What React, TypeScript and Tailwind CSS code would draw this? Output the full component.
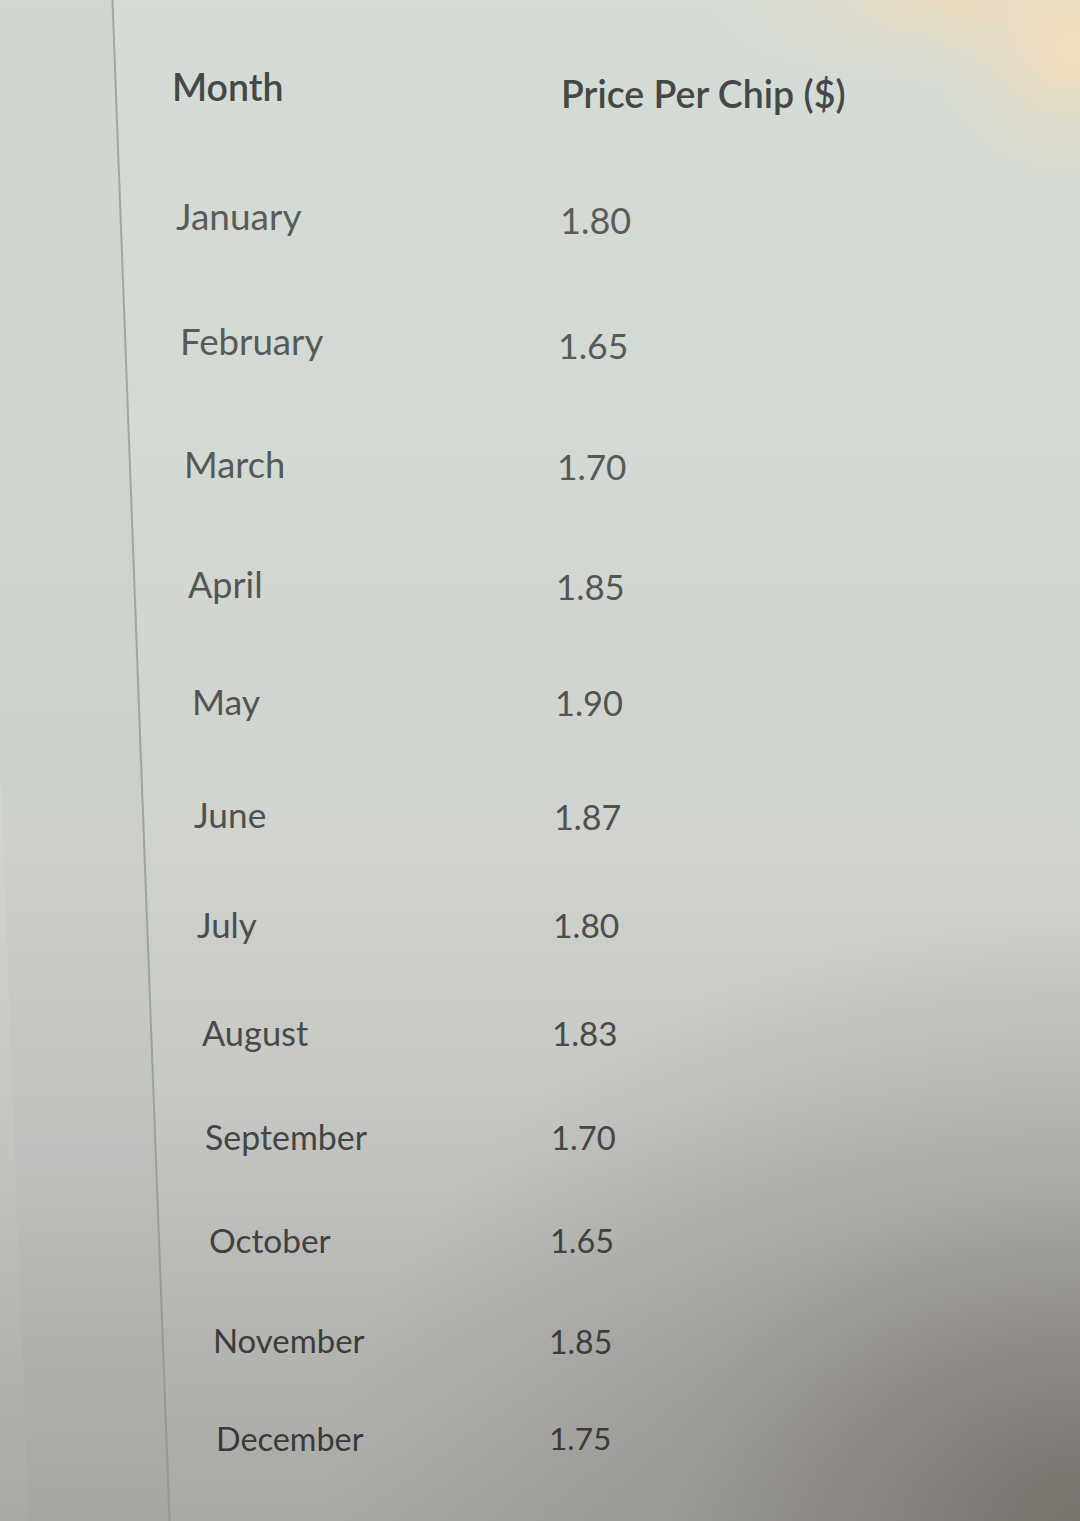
import React from "react";

type Row = {
  month: string;
  price: string;
  row: string;
  monthCell: string;
  priceCell: string;
};

const rows: Row[] = [
  {
    month: "January",
    price: "1.80",
    row: "h-[127px] text-[#595d5a]",
    monthCell: "w-[418px] pl-[34px] pb-[4px] text-[37px]",
    priceCell: "pt-[4px] text-[36px]",
  },
  {
    month: "February",
    price: "1.65",
    row: "h-[124px] text-[#575b58]",
    monthCell: "w-[416px] pl-[38px] pb-[4px] text-[36.7px]",
    priceCell: "pt-[5px] text-[35.6px]",
  },
  {
    month: "March",
    price: "1.70",
    row: "h-[121px] text-[#555956]",
    monthCell: "w-[415px] pl-[42px] pb-[3px] text-[36.3px]",
    priceCell: "pt-[3px] text-[35.2px]",
  },
  {
    month: "April",
    price: "1.85",
    row: "h-[119px] text-[#535754]",
    monthCell: "w-[414px] pl-[46px] pb-[3px] text-[36px]",
    priceCell: "pt-[3px] text-[34.8px]",
  },
  {
    month: "May",
    price: "1.90",
    row: "h-[115px] text-[#515452]",
    monthCell: "w-[413px] pl-[50px] pb-[2px] text-[35.6px]",
    priceCell: "pt-[2px] text-[34.4px]",
  },
  {
    month: "June",
    price: "1.87",
    row: "h-[111px] text-[#4e514f]",
    monthCell: "w-[412px] pl-[52px] pb-[2px] text-[35.2px]",
    priceCell: "pt-[2px] text-[34px]",
  },
  {
    month: "July",
    price: "1.80",
    row: "h-[109px] text-[#4b4e4c]",
    monthCell: "w-[411px] pl-[55px] text-[34.8px]",
    priceCell: "pt-[1px] text-[33.6px]",
  },
  {
    month: "August",
    price: "1.83",
    row: "h-[106px] text-[#484a48]",
    monthCell: "w-[410px] pl-[60px] text-[34.4px]",
    priceCell: "pt-[1px] text-[33.2px]",
  },
  {
    month: "September",
    price: "1.70",
    row: "h-[104px] text-[#444644]",
    monthCell: "w-[409px] pl-[63px] text-[33.9px]",
    priceCell: "pt-[1px] text-[32.8px]",
  },
  {
    month: "October",
    price: "1.65",
    row: "h-[102px] text-[#404140]",
    monthCell: "w-[408px] pl-[67px] text-[33.4px]",
    priceCell: "pt-[1px] text-[32.4px]",
  },
  {
    month: "November",
    price: "1.85",
    row: "h-[98px] text-[#3c3d3b]",
    monthCell: "w-[407px] pl-[71px] text-[32.9px]",
    priceCell: "pt-[1px] text-[32px]",
  },
  {
    month: "December",
    price: "1.75",
    row: "h-[98px] text-[#393a38]",
    monthCell: "w-[407px] pl-[74px] text-[32.4px]",
    priceCell: "text-[31.6px]",
  },
];

export default function App() {
  return (
    <div className="relative w-[1080px] h-[1521px] overflow-hidden font-['Lato',sans-serif] bg-[radial-gradient(ellipse_22%_6%_at_88%_0%,rgba(240,220,185,0.75)_0%,rgba(235,220,195,0.3)_60%,transparent_100%),radial-gradient(circle_at_99%_3%,rgba(248,222,180,0.9)_0%,rgba(240,220,185,0.4)_4%,transparent_8%),radial-gradient(ellipse_70%_40%_at_100%_100%,rgba(105,100,94,0.8)_0%,rgba(130,126,120,0.35)_55%,transparent_100%),linear-gradient(to_bottom,#d5dcd6_0%,#d3d9d3_30%,#d0d3ce_55%,#c6c8c4_72%,#b4b4b1_88%,#a8a8a5_100%)]">
      <div className="flex h-full">
        {/* left side strip with slanted divider */}
        <div className="w-[142px] shrink-0 h-full border-r-2 border-[#8d928e]/70 skew-x-[2.15deg] bg-[#000000]/[0.015]" />

        {/* table */}
        <div className="flex flex-col pt-[26px] leading-none">
          <div className="flex items-center h-[128px] text-[37.5px] font-semibold text-[#454946]">
            <div className="w-[419px] pl-[30px] pb-[7px]">Month</div>
            <div className="pt-[7px]">Price Per Chip ($)</div>
          </div>
          {rows.map((r) => (
            <div key={r.month} className={`flex items-center ${r.row}`}>
              <div className={r.monthCell}>{r.month}</div>
              <div className={r.priceCell}>{r.price}</div>
            </div>
          ))}
        </div>
      </div>
    </div>
  );
}
